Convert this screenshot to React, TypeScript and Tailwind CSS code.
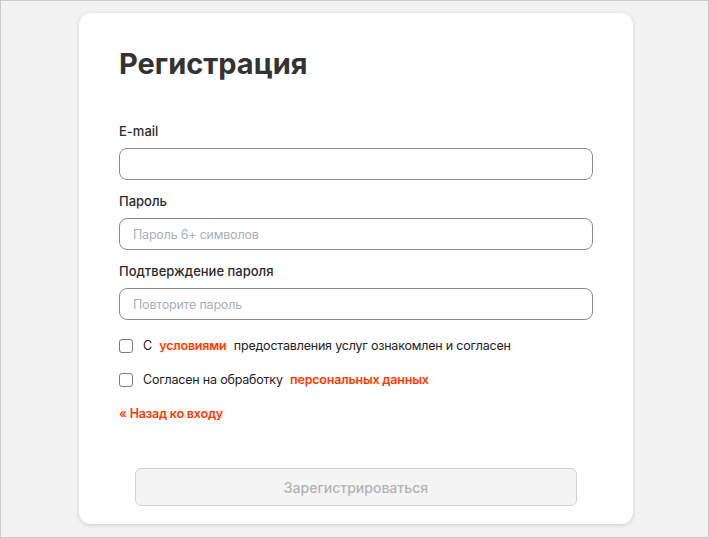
import { useState } from 'react';

function Field({ label, placeholder, type = 'text' }: { label: string; placeholder?: string; type?: string }) {
  return (
    <div className="flex flex-col">
      <label className="text-[13px] leading-4 font-medium text-[#2b2b2b] mb-[9px]">{label}</label>
      <input
        type={type}
        placeholder={placeholder}
        className="h-[32px] w-full rounded-[8px] border border-[#8c8c8c] bg-white px-[13px] text-[12.5px] tracking-[-0.2px] text-[#333] placeholder:text-[#a7b0b9] outline-none"
      />
    </div>
  );
}

function Check({ checked, onChange, children }: { checked: boolean; onChange: () => void; children: React.ReactNode }) {
  return (
    <label className="flex items-center h-[34px] cursor-pointer text-[12.5px] tracking-[-0.2px] text-[#222]">
      <input type="checkbox" checked={checked} onChange={onChange} className="sr-only" />
      <span className="w-[14px] h-[14px] rounded-[3px] border border-[#7a7a7a] bg-white mr-[10px] shrink-0" />
      <span>{children}</span>
    </label>
  );
}

export default function App() {
  const [terms, setTerms] = useState(false);
  const [personal, setPersonal] = useState(false);

  return (
    <div
      className="h-[538px] bg-[#f2f2f2] border border-[#c9c9c9] flex justify-center pt-[12px] pl-[3px]"
      style={{ fontFamily: 'Inter, "Noto Sans", sans-serif' }}
    >
      <div className="w-[554px] h-[511px] bg-white rounded-[12px] shadow-[0_1px_4px_rgba(0,0,0,0.15)] px-[40px] pt-[34px] pb-[18px] flex flex-col">
        <h1 className="text-[29px] leading-[34px] font-bold text-[#333]">Регистрация</h1>

        <div className="mt-[42px] flex flex-col gap-[13px]">
          <Field label="E-mail" type="email" />
          <Field label="Пароль" placeholder="Пароль 6+ символов" type="password" />
          <Field label="Подтверждение пароля" placeholder="Повторите пароль" type="password" />
        </div>

        <div className="mt-[9px] flex flex-col">
          <Check checked={terms} onChange={() => setTerms(!terms)}>
            С <a className="font-semibold text-[#ff3a00] mx-[4px]">условиями</a> предоставления услуг ознакомлен и согласен
          </Check>
          <Check checked={personal} onChange={() => setPersonal(!personal)}>
            Согласен на обработку <a className="font-semibold text-[#ff3a00] ml-[4px]">персональных данных</a>
          </Check>
          <a className="h-[34px] flex items-center text-[12.5px] tracking-[-0.2px] font-semibold text-[#ff3a00]">« Назад ко входу</a>
        </div>

        <div className="mt-auto px-[16px]">
          <button
            disabled={!terms || !personal}
            className="w-full h-[38px] rounded-[6px] border border-[#d2d2d2] bg-[#f4f4f4] text-[14px] font-medium text-[#b3b3b3]"
          >
            Зарегистрироваться
          </button>
        </div>
      </div>
    </div>
  );
}
